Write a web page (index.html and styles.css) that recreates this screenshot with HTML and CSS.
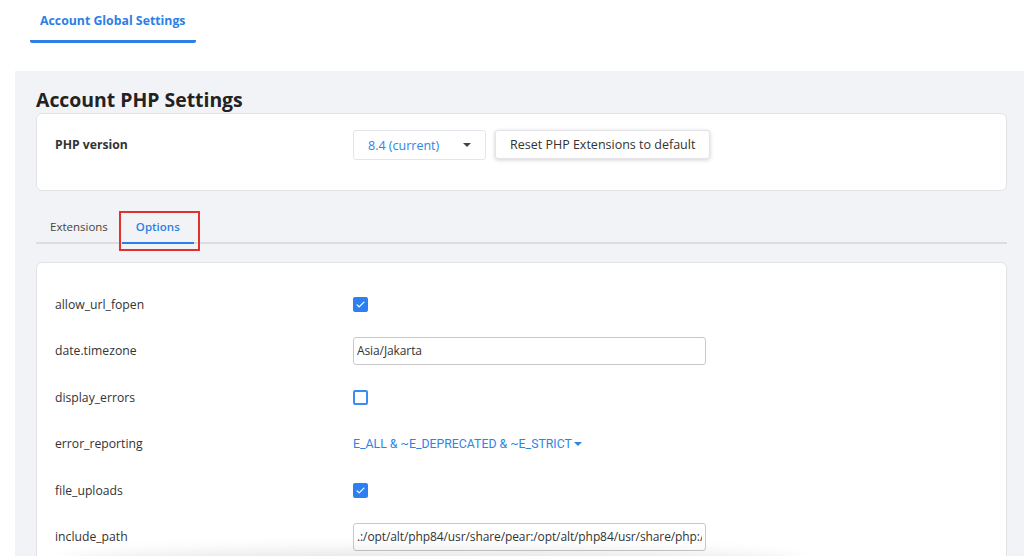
FILE: index.html
```html
<!DOCTYPE html>
<html lang="en">
<head>
    <meta charset="UTF-8">
    <meta name="viewport" content="width=device-width, initial-scale=1.0">
    <title>Account PHP Settings</title>
    <link rel="stylesheet" href="styles.css">
</head>
<body>
    <div class="topbar">
        <a class="top-tab" href="#">Account Global Settings</a>
    </div>

    <div class="main">
        <h1>Account PHP Settings</h1>

        <div class="card version-card">
            <div class="label bold">PHP version</div>
            <div class="controls">
                <div class="select">
                    <span>8.4 (current)</span>
                    <span class="caret"></span>
                </div>
                <button class="btn">Reset PHP Extensions to default</button>
            </div>
        </div>

        <div class="tabs">
            <a class="tab" href="#">Extensions</a>
            <a class="tab active" href="#">Options<span class="highlight"></span></a>
        </div>

        <div class="card options-card">
            <div class="row">
                <div class="label">allow_url_fopen</div>
                <span class="check checked"><svg viewBox="0 0 16 16" width="11" height="11"><path d="M3 8.5l3 3 7-7" fill="none" stroke="#fff" stroke-width="1.8" stroke-linecap="round" stroke-linejoin="round"/></svg></span>
            </div>
            <div class="row">
                <div class="label">date.timezone</div>
                <input class="text-input" type="text" value="Asia/Jakarta">
            </div>
            <div class="row">
                <div class="label">display_errors</div>
                <span class="check"></span>
            </div>
            <div class="row">
                <div class="label">error_reporting</div>
                <a class="dropdown" href="#">E_ALL &amp; ~E_DEPRECATED &amp; ~E_STRICT<span class="caret blue"></span></a>
            </div>
            <div class="row">
                <div class="label">file_uploads</div>
                <span class="check checked"><svg viewBox="0 0 16 16" width="11" height="11"><path d="M3 8.5l3 3 7-7" fill="none" stroke="#fff" stroke-width="1.8" stroke-linecap="round" stroke-linejoin="round"/></svg></span>
            </div>
            <div class="row">
                <div class="label">include_path</div>
                <input class="text-input" type="text" value=".:/opt/alt/php84/usr/share/pear:/opt/alt/php84/usr/share/php:/usr/share/pear:/usr/share/php">
            </div>
        </div>
    </div>

    <div class="bottom-shade"></div>
</body>
</html>
```

FILE: styles.css
```css
body {
    margin: 0;
    font-family: 'Open Sans', sans-serif;
    background-color: #fff;
    color: #333;
    overflow: hidden;
}

.topbar {
    height: 71px;
    padding-left: 30px;
    background: #fff;
}

.top-tab {
    display: inline-block;
    width: 166px;
    box-sizing: border-box;
    padding: 12px 0 0 10px;
    height: 43px;
    font-size: 12.3px;
    font-weight: 700;
    color: #2b7fe6;
    text-decoration: none;
    border-bottom: 3px solid #2b7fe6;
    border-radius: 0 0 2px 2px;
}

.main {
    margin-left: 15px;
    padding: 16px 17px 0 21px;
    background-color: #f2f3f6;
    height: 600px;
}

h1 {
    margin: 0;
    font-size: 19.4px;
    line-height: 26px;
    font-weight: 700;
    color: #222;
}

.card {
    background: #fff;
    border: 1px solid #e2e3e7;
    border-radius: 6px;
}

.version-card {
    display: flex;
    padding: 16px 0 0 18px;
    box-sizing: border-box;
    height: 78px;
}

.label {
    width: 298px;
    flex: none;
    font-size: 12.2px;
    color: #333;
}

.label.bold {
    font-weight: 700;
    line-height: 30px;
    height: 30px;
}

.controls {
    display: flex;
    gap: 9px;
}

.select {
    display: flex;
    align-items: center;
    justify-content: space-between;
    width: 133px;
    height: 30px;
    box-sizing: border-box;
    padding: 0 14px 0 14px;
    border: 1px solid #e2e5ec;
    border-radius: 3px;
    font-size: 12.5px;
    color: #2b85e8;
}

.caret {
    width: 0;
    height: 0;
    border-left: 4px solid transparent;
    border-right: 4px solid transparent;
    border-top: 4px solid #444;
}

.caret.blue {
    border-top-color: #2b85e8;
    margin-left: 2px;
}

.btn {
    height: 29px;
    padding: 0 14px;
    background: #fff;
    border: 1px solid #e4e4e8;
    border-radius: 3px;
    box-shadow: 0 1px 4px rgba(0, 0, 0, 0.18);
    font-family: 'Open Sans', sans-serif;
    font-size: 12.5px;
    color: #333;
}

.tabs {
    display: flex;
    margin-top: 22px;
    border-bottom: 2px solid #dcdddf;
}

.tab {
    position: relative;
    padding: 6px 14px 8px 14px;
    font-size: 11.5px;
    color: #444;
    text-decoration: none;
    margin-bottom: -2px;
    border-bottom: 2px solid transparent;
}

.tab.active {
    color: #2b7fe6;
    border-bottom-color: #2b7fe6;
    font-weight: 600;
}

.highlight {
    position: absolute;
    left: -3px;
    top: -2px;
    width: 81px;
    height: 40px;
    box-sizing: border-box;
    border: 2px solid #e2302d;
}

.options-card {
    margin-top: 18px;
    padding: 18px 0 0 18px;
    height: 320px;
}

.row {
    display: flex;
    align-items: center;
    height: 46.5px;
}

.check {
    display: flex;
    align-items: center;
    justify-content: center;
    width: 15px;
    height: 15px;
    box-sizing: border-box;
    border: 2px solid #3a8cf2;
    border-radius: 2px;
    background: #fff;
}

.check.checked {
    background: #2d80f2;
    border-color: #2d80f2;
}

.text-input {
    width: 353px;
    height: 28px;
    box-sizing: border-box;
    padding: 0 3px;
    border: 1px solid #c9c9cc;
    border-radius: 3px;
    font-family: 'Open Sans', sans-serif;
    font-size: 12px;
    letter-spacing: -0.1px;
    color: #333;
    background: #fff;
}

.dropdown {
    display: flex;
    align-items: center;
    font-family: Roboto, sans-serif;
    font-size: 12.3px;
    color: #2b85e8;
    text-decoration: none;
}

.bottom-shade {
    position: fixed;
    left: 60px;
    right: 220px;
    bottom: -30px;
    height: 30px;
    background: #fff;
    box-shadow: 0 -4px 18px rgba(0, 0, 0, 0.12);
    border-radius: 50%;
}
```
